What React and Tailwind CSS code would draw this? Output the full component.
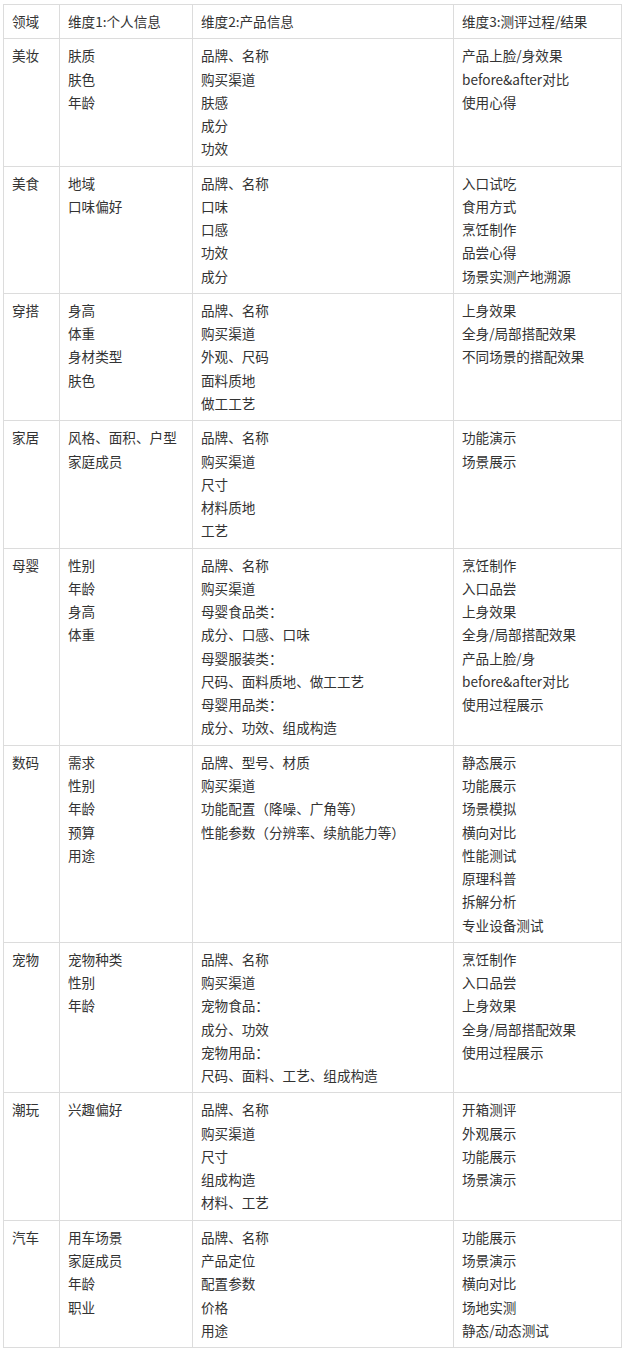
import React from 'react';

const rows = [
    ['美妆', ['肤质', '肤色', '年龄'], ['品牌、名称', '购买渠道', '肤感', '成分', '功效'], ['产品上脸/身效果', 'before&after对比', '使用心得']],
    ['美食', ['地域', '口味偏好'], ['品牌、名称', '口味', '口感', '功效', '成分'], ['入口试吃', '食用方式', '烹饪制作', '品尝心得', '场景实测产地溯源']],
    ['穿搭', ['身高', '体重', '身材类型', '肤色'], ['品牌、名称', '购买渠道', '外观、尺码', '面料质地', '做工工艺'], ['上身效果', '全身/局部搭配效果', '不同场景的搭配效果']],
    ['家居', ['风格、面积、户型', '家庭成员'], ['品牌、名称', '购买渠道', '尺寸', '材料质地', '工艺'], ['功能演示', '场景展示']],
    ['母婴', ['性别', '年龄', '身高', '体重'], ['品牌、名称', '购买渠道', '母婴食品类：', '成分、口感、口味', '母婴服装类：', '尺码、面料质地、做工工艺', '母婴用品类：', '成分、功效、组成构造'], ['烹饪制作', '入口品尝', '上身效果', '全身/局部搭配效果', '产品上脸/身', 'before&after对比', '使用过程展示']],
    ['数码', ['需求', '性别', '年龄', '预算', '用途'], ['品牌、型号、材质', '购买渠道', '功能配置（降噪、广角等）', '性能参数（分辨率、续航能力等）'], ['静态展示', '功能展示', '场景模拟', '横向对比', '性能测试', '原理科普', '拆解分析', '专业设备测试']],
    ['宠物', ['宠物种类', '性别', '年龄'], ['品牌、名称', '购买渠道', '宠物食品：', '成分、功效', '宠物用品：', '尺码、面料、工艺、组成构造'], ['烹饪制作', '入口品尝', '上身效果', '全身/局部搭配效果', '使用过程展示']],
    ['潮玩', ['兴趣偏好'], ['品牌、名称', '购买渠道', '尺寸', '组成构造', '材料、工艺'], ['开箱测评', '外观展示', '功能展示', '场景演示']],
    ['汽车', ['用车场景', '家庭成员', '年龄', '职业'], ['品牌、名称', '产品定位', '配置参数', '价格', '用途'], ['功能展示', '场景演示', '横向对比', '场地实测', '静态/动态测试']],
];

const cell = 'border border-[#dcdcdc] px-2 py-[5px] align-top';

const Lines = ({ items }) => (
    <>
        {items.map((t, i) => (
            <div key={i}>{t}</div>
        ))}
    </>
);

export default function App() {
    return (
        <div className="bg-white min-h-screen pt-[4px] pl-[3px] text-[#333] text-[13.6px] leading-[23.27px] font-['Noto_Sans_CJK_SC','Noto_Sans',sans-serif]">
            <table className="w-[619px] table-fixed border-collapse">
                <colgroup>
                    <col className="w-[56px]" />
                    <col className="w-[133px]" />
                    <col className="w-[261px]" />
                    <col className="w-[168px]" />
                </colgroup>
                <thead>
                    <tr>
                        <th className={`${cell} text-left font-normal`}>领域</th>
                        <th className={`${cell} text-left font-normal`}>维度1:个人信息</th>
                        <th className={`${cell} text-left font-normal`}>维度2:产品信息</th>
                        <th className={`${cell} text-left font-normal`}>维度3:测评过程/结果</th>
                    </tr>
                </thead>
                <tbody>
                    {rows.map(([name, a, b, c]) => (
                        <tr key={name}>
                            <td className={cell}>{name}</td>
                            <td className={cell}><Lines items={a} /></td>
                            <td className={cell}><Lines items={b} /></td>
                            <td className={cell}><Lines items={c} /></td>
                        </tr>
                    ))}
                </tbody>
            </table>
        </div>
    );
}
